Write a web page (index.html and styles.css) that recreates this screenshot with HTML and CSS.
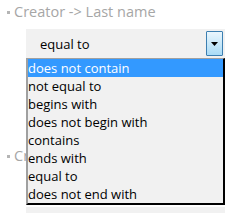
FILE: index.html
```html
<!DOCTYPE html>
<html lang="en">
<head>
  <meta charset="UTF-8">
  <title>Filter</title>
  <link rel="stylesheet" href="styles.css">
</head>
<body>

<div class="filters">

  <!-- First filter -->
  <div class="filter">
    <div class="label"><span class="dot"></span>Creator -&gt; Last name</div>
    <div class="select">
      <span class="value">equal to</span>
      <span class="arrow">
        <svg width="7" height="4" viewBox="0 0 7 4"><polygon points="0,0 7,0 3.5,4" fill="#000"/></svg>
      </span>

      <!-- Open option list -->
      <ul class="options">
        <li class="active">does not contain</li>
        <li>not equal to</li>
        <li>begins with</li>
        <li>does not begin with</li>
        <li>contains</li>
        <li>ends with</li>
        <li>equal to</li>
        <li>does not end with</li>
      </ul>
    </div>
  </div>

  <!-- Second filter -->
  <div class="filter second">
    <div class="label"><span class="dot"></span>Creator -&gt; First name</div>
    <div class="select low"></div>
  </div>

</div>

</body>
</html>
```

FILE: styles.css
```css
body {
  margin: 0;
  background: #ffffff;
  font-family: "Open Sans", Arial, sans-serif;
  font-size: 13px;
}

.filters {
  padding: 0;
}

.label {
  height: 24px;
  line-height: 24px;
  font-size: 14.5px;
  color: #a6a6a6;
  padding-left: 7px;
  display: flex;
  align-items: center;
  white-space: nowrap;
}

.dot {
  width: 3px;
  height: 3px;
  background: #b5b5b5;
  margin-right: 4px;
  margin-top: 1px;
}

.select {
  position: relative;
  margin: 5px 4px 0 26px;
  height: 29px;
  background: #f1f1f1;
  display: flex;
  align-items: center;
}

.value {
  padding-left: 14px;
  flex: 1;
  color: #000;
}

.arrow {
  width: 15px;
  height: 23px;
  margin-right: 2px;
  border: 1px solid #3c7fb1;
  border-radius: 1px;
  background: linear-gradient(#eaf6fd, #a9dbf6);
  display: flex;
  align-items: center;
  justify-content: center;
}

.options {
  position: absolute;
  left: 0;
  right: 0;
  top: 29px;
  margin: 0;
  padding: 0;
  list-style: none;
  background: #f1f1f1;
  border-top: 1px solid #a0a0a0;
  border-left: 2px solid #a0a0a0;
  border-right: 2px solid #000;
  border-bottom: 2px solid #000;
  z-index: 2;
}

.options li {
  height: 18px;
  line-height: 18px;
  color: #000;
  white-space: nowrap;
}

.options li.active {
  background: #3399ff;
  color: #ffffff;
}

.second {
  margin-top: 86px;
}

.select.low {
  margin-top: 39px;
  height: 6px;
}
```
